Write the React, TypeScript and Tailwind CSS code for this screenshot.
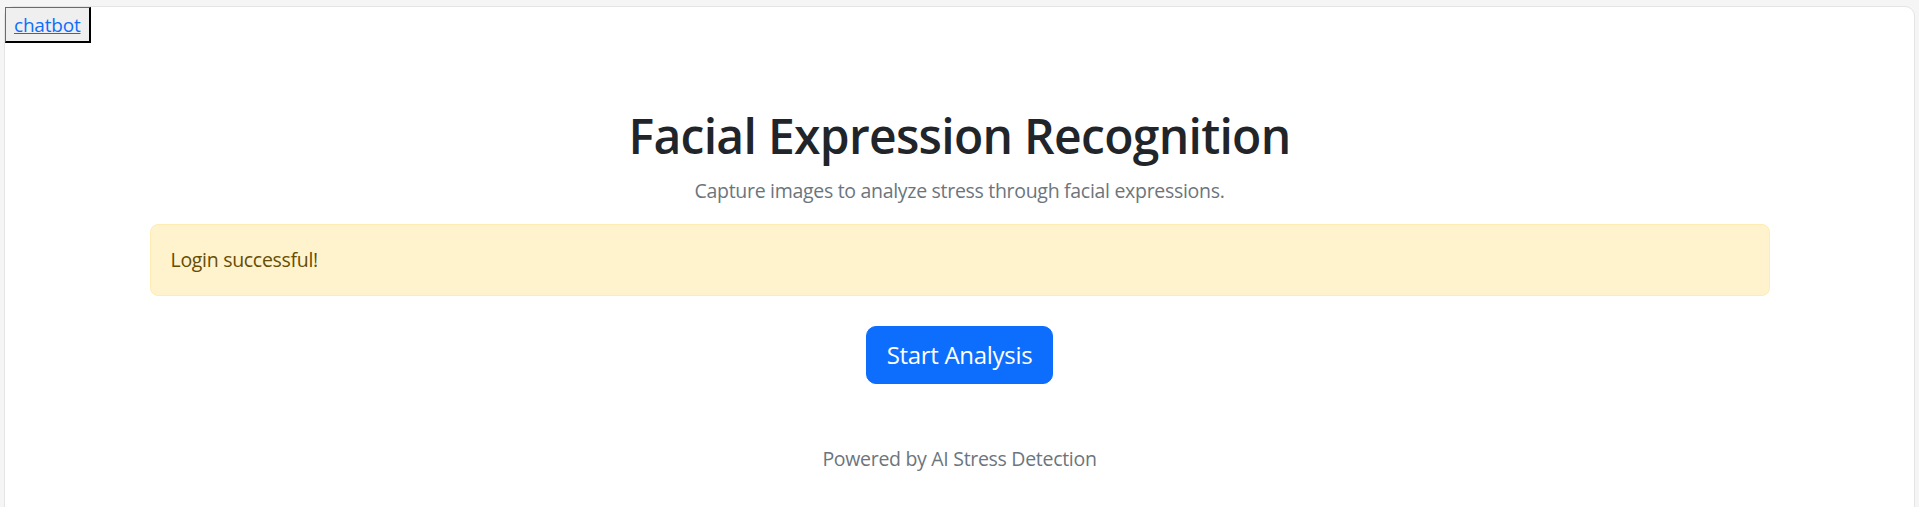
export default function App() {
  return (
    <div
      className="min-h-screen bg-[#f5f5f5] px-[4px] pt-[6px]"
      style={{ fontFamily: '"Open Sans", "Noto Sans", sans-serif' }}
    >
      <div className="min-h-[700px] rounded-[10px] border border-[#e4e4e4] bg-white">
        <button
          type="button"
          className="block h-[36px] border-t border-l border-[#6b6b6b] border-r-2 border-b-2 border-r-black border-b-black bg-[#efefef] px-[8px] text-[19px] leading-[30px] tracking-[-0.2px]"
        >
          <a href="#" className="text-[#0d6efd] underline">
            chatbot
          </a>
        </button>

        <div className="mx-auto mt-[63px] max-w-[1650px] px-[15px] text-center">
          <h1 className="mb-[10px] text-[48px] font-semibold leading-[60px] tracking-[-0.7px] text-[#212529]">
            Facial Expression Recognition
          </h1>
          <p className="mb-[18px] text-[19.5px] leading-[30px] tracking-[-0.3px] text-[#6c757d]">
            Capture images to analyze stress through facial expressions.
          </p>

          <div className="mb-[30px] rounded-[8px] border border-[#ffecb5] bg-[#fff3cd] px-[20px] py-[20px] text-left text-[19.5px] leading-[30px] tracking-[-0.3px] text-[#664d03]">
            Login successful!
          </div>

          <button
            type="button"
            className="rounded-[10px] border border-[#0d6efd] bg-[#0d6efd] px-[20px] py-[10px] text-[24px] leading-[36px] tracking-[-0.3px] text-white"
          >
            Start Analysis
          </button>

          <p className="mt-[60px] text-[19.5px] leading-[30px] tracking-[-0.3px] text-[#6c757d]">
            Powered by AI Stress Detection
          </p>
        </div>
      </div>
    </div>
  )
}
